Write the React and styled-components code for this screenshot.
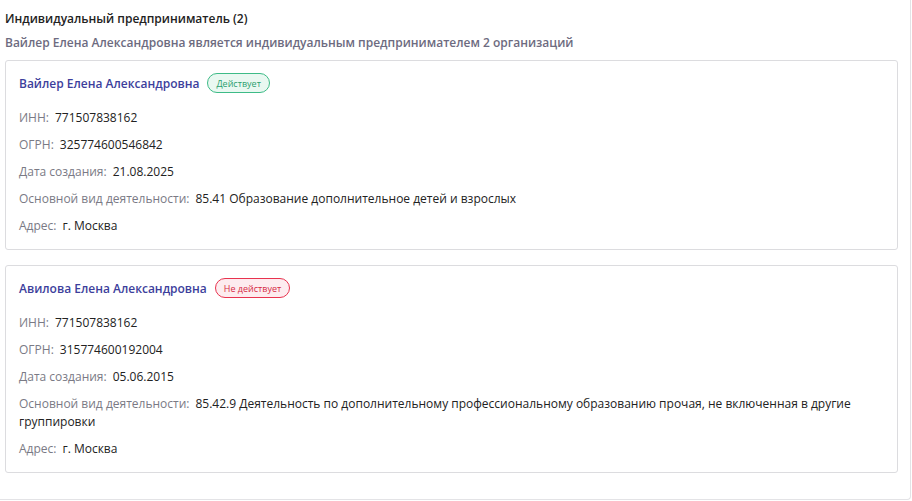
import React from 'react';
import styled, { createGlobalStyle } from 'styled-components';

const GlobalStyle = createGlobalStyle`
  html, body {
    margin: 0;
    padding: 0;
    background: #fff;
  }
  body {
    font-family: "Open Sans", "Noto Sans", sans-serif;
    color: #222;
  }
`;

const Panel = styled.div`
  width: 911px;
  height: 500px;
  box-sizing: border-box;
  border-right: 1px solid #e3e3e6;
  border-bottom: 1px solid #e3e3e6;
  border-bottom-right-radius: 4px;
  padding: 10px 12px 0 5px;
`;

const Title = styled.h2`
  margin: 0;
  font-size: 12px;
  line-height: 18px;
  font-weight: 600;
  color: #222;
`;

const Subtitle = styled.p`
  margin: 6px 0 8px;
  font-size: 12px;
  line-height: 18px;
  font-weight: 600;
  color: #6d6b80;
`;

const List = styled.div`
  display: flex;
  flex-direction: column;
  gap: 15px;
`;

const Card = styled.div`
  border: 1px solid #dcdcdf;
  border-radius: 3px;
  padding: 12px 13px 14px 13px;
`;

const Header = styled.div`
  display: flex;
  align-items: center;
  gap: 8px;
  height: 20px;
  margin-bottom: 16px;
`;

const Name = styled.a`
  font-size: 12px;
  font-weight: 600;
  color: #3d3f9c;
  text-decoration: none;
`;

const Badge = styled.span`
  display: inline-flex;
  align-items: center;
  box-sizing: border-box;
  height: 20px;
  padding: 0 8px;
  border-radius: 10px;
  font-size: 9px;
  border: 1px solid ${p => (p.$active ? '#3dbb87' : '#e8334f')};
  background: ${p => (p.$active ? '#e9f8f1' : '#fdecef')};
  color: ${p => (p.$active ? '#2b9f6e' : '#d62944')};
`;

const Rows = styled.div`
  display: flex;
  flex-direction: column;
  gap: 9px;
`;

const Row = styled.div`
  font-size: 12px;
  line-height: 18px;
  color: #222;
`;

const Label = styled.span`
  color: #7a7a85;
  margin-right: 6px;
`;

const items = [
  {
    name: 'Вайлер Елена Александровна',
    active: true,
    inn: '771507838162',
    ogrn: '325774600546842',
    date: '21.08.2025',
    activity: '85.41 Образование дополнительное детей и взрослых',
    address: 'г. Москва',
  },
  {
    name: 'Авилова Елена Александровна',
    active: false,
    inn: '771507838162',
    ogrn: '315774600192004',
    date: '05.06.2015',
    activity:
      '85.42.9 Деятельность по дополнительному профессиональному образованию прочая, не включенная в другие группировки',
    address: 'г. Москва',
  },
];

export default function App() {
  return (
    <>
      <GlobalStyle />
      <Panel>
        <Title>Индивидуальный предприниматель (2)</Title>
        <Subtitle>Вайлер Елена Александровна является индивидуальным предпринимателем 2 организаций</Subtitle>
        <List>
          {items.map((it, i) => (
            <Card key={i}>
              <Header>
                <Name href="#">{it.name}</Name>
                <Badge $active={it.active}>{it.active ? 'Действует' : 'Не действует'}</Badge>
              </Header>
              <Rows>
                <Row><Label>ИНН:</Label>{it.inn}</Row>
                <Row><Label>ОГРН:</Label>{it.ogrn}</Row>
                <Row><Label>Дата создания:</Label>{it.date}</Row>
                <Row><Label>Основной вид деятельности:</Label>{it.activity}</Row>
                <Row><Label>Адрес:</Label>{it.address}</Row>
              </Rows>
            </Card>
          ))}
        </List>
      </Panel>
    </>
  );
}
